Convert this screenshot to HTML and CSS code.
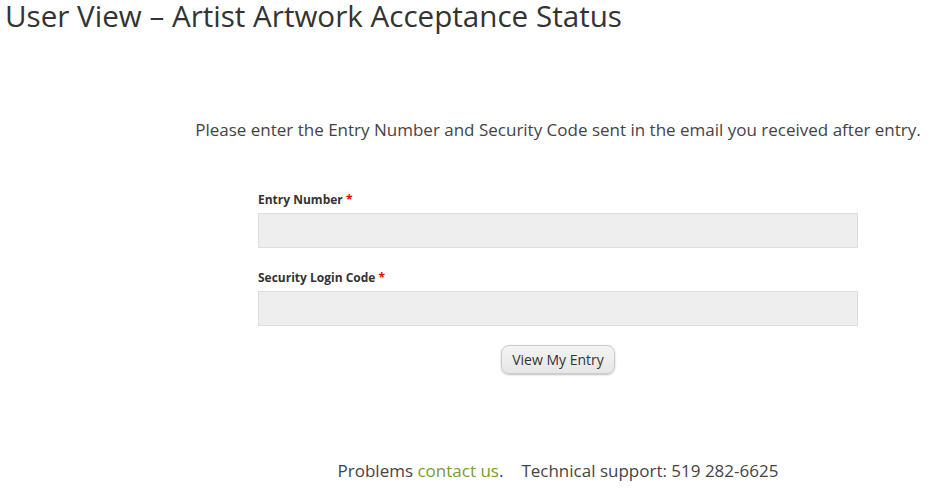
FILE: index.html
```html
<!DOCTYPE html>
<html>
<head>
<meta charset="utf-8">
<link rel="stylesheet" href="styles.css">
</head>
<body>
<h1 class="title">User View – Artist Artwork Acceptance Status</h1>
<main class="content">
  <p class="intro">Please enter the Entry Number and Security Code sent in the email you received after entry.</p>
  <form class="form">
    <div class="field">
      <label class="label">Entry Number <span class="req">*</span></label>
      <input class="input" type="text">
    </div>
    <div class="field">
      <label class="label">Security Login Code <span class="req">*</span></label>
      <input class="input" type="text">
    </div>
    <div class="actions">
      <button class="btn" type="button">View My Entry</button>
    </div>
  </form>
  <p class="footer">Problems <a class="link" href="#">contact us</a><span class="dot">.</span><span class="gap"></span>Technical support: 519 282-6625</p>
</main>
</body>
</html>
```
FILE: styles.css
```css
html, body {
  margin: 0;
  padding: 0;
  background: #fff;
}
body {
  font-family: "Open Sans", "Liberation Sans", sans-serif;
  color: #333;
}
.title {
  margin: 0;
  padding: 0 0 0 5px;
  font-size: 29.6px;
  font-weight: 400;
  line-height: 31px;
  color: #333;
}
.content {
  width: 760px;
  margin-left: 178px;
  display: flex;
  flex-direction: column;
  align-items: center;
}
.intro {
  margin: 87px 0 0 0;
  font-size: 17px;
  line-height: 24px;
  color: #444;
  text-align: center;
  white-space: nowrap;
}
.form {
  width: 600px;
  margin-top: 50px;
  display: flex;
  flex-direction: column;
}
.field {
  display: flex;
  flex-direction: column;
  margin-bottom: 22px;
}
.label {
  font-size: 12px;
  font-weight: 700;
  line-height: 15px;
  color: #333;
  margin-bottom: 6px;
}
.req {
  color: #e00;
}
.input {
  box-sizing: border-box;
  width: 600px;
  height: 35px;
  margin: 0;
  background: #eee;
  border: 1px solid #ddd;
  border-radius: 0;
  outline: none;
}
.actions {
  display: flex;
  justify-content: center;
  margin-top: -3px;
}
.btn {
  font-family: "Open Sans", "Liberation Sans", sans-serif;
  font-size: 14px;
  color: #333;
  height: 29px;
  padding: 0 10.5px;
  border: 1px solid #ccc;
  border-radius: 8px;
  background: linear-gradient(#f4f4f4, #e6e6e6);
  box-shadow: 0 1px 2px rgba(0,0,0,0.25);
}
.footer {
  margin: 85px 0 0 0;
  font-size: 17px;
  line-height: 24px;
  color: #444;
  white-space: nowrap;
}
.link {
  color: #7d9a2c;
  text-decoration: none;
}
.dot {
  color: #2222ee;
}
.gap {
  display: inline-block;
  width: 18px;
}
```
